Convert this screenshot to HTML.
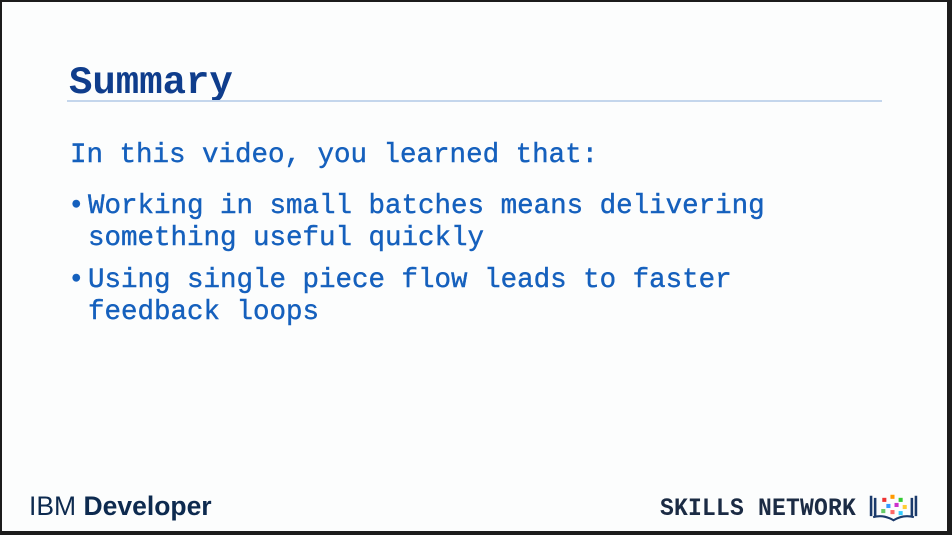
<!DOCTYPE html>
<html><head><meta charset="utf-8"><style>
html,body{margin:0;padding:0}
body{width:952px;height:535px;background:#1c1c1c;position:relative;overflow:hidden;font-family:"Liberation Mono",monospace}
.s{position:absolute;left:2px;top:2px;width:945px;height:529px;background:#fcfdfd}
.t{position:absolute;white-space:pre;color:#1560bd;font-size:27.5px;line-height:32px;-webkit-text-stroke:0.4px #1560bd}
</style></head><body>
<div class="s"></div>
<div class="t" style="left:69px;top:60px;font-size:39px;font-weight:bold;color:#0f3d8c;line-height:46px;-webkit-text-stroke:0">Summary</div>
<div style="position:absolute;left:67px;top:100px;width:815px;height:2px;background:#c4d6ec"></div>
<div class="t" style="left:70px;top:140px">In this video, you learned that:</div>
<div class="t" style="left:68px;top:191px">•</div>
<div class="t" style="left:88px;top:191px">Working in small batches means delivering
something useful quickly</div>
<div class="t" style="left:68px;top:265px">•</div>
<div class="t" style="left:88px;top:265px">Using single piece flow leads to faster
feedback loops</div>
<div style="position:absolute;left:29px;top:491px;font-family:'Liberation Sans',sans-serif;font-size:26.5px;color:#0d2a4f;white-space:pre">IBM <b>Developer</b></div>
<div style="position:absolute;left:660px;top:494px;font-family:'Liberation Mono',monospace;font-weight:bold;font-size:23px;color:#1b2b44;letter-spacing:0.2px;transform:scaleY(1.1);transform-origin:left top">SKILLS NETWORK</div>
<svg style="position:absolute;left:868px;top:491px" width="51" height="32" viewBox="0 0 50 30">
<path d="M3 4v20M7 6v18M43 6v18M47 4v20" stroke="#1b3a6b" stroke-width="2.5" fill="none"/>
<path d="M5 25q10-3 20 3q10-6 20-3" stroke="#1b3a6b" stroke-width="2" fill="none"/>
<rect x="14" y="6" width="4" height="4" fill="#e33"/><rect x="22" y="3" width="4" height="4" fill="#f90"/><rect x="30" y="6" width="4" height="4" fill="#3c3"/>
<rect x="18" y="12" width="4" height="4" fill="#39f"/><rect x="26" y="11" width="4" height="4" fill="#c3c"/><rect x="34" y="13" width="4" height="4" fill="#fc3"/>
<rect x="13" y="17" width="4" height="4" fill="#6c6"/><rect x="22" y="18" width="4" height="4" fill="#f66"/><rect x="30" y="19" width="4" height="4" fill="#3cf"/>
</svg>
</body></html>
